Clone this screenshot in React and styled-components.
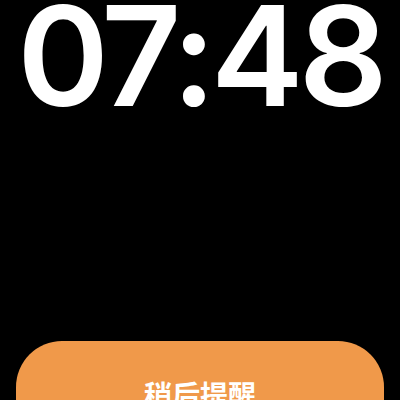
import React from "react";
import styled, { createGlobalStyle } from "styled-components";

const GlobalStyle = createGlobalStyle`
  html, body {
    margin: 0;
    padding: 0;
    background: #000;
    overflow: hidden;
  }
`;

const Screen = styled.div`
  width: 400px;
  height: 400px;
  background: #000;
  display: flex;
  flex-direction: column;
  align-items: center;
  overflow: hidden;
`;

const Clock = styled.div`
  flex-shrink: 0;
  height: 341px;
  font-family: Inter, "Noto Sans", sans-serif;
  font-weight: 600;
  font-size: 139px;
  line-height: 0.8;
  color: #fff;
  letter-spacing: -5px;
`;

const SnoozeButton = styled.button`
  flex-shrink: 0;
  width: 368px;
  height: 106px;
  border: none;
  border-radius: 46px;
  background: #f0994a;
  color: #fff;
  font-family: "Noto Sans CJK SC", sans-serif;
  font-weight: 700;
  font-size: 28px;
  padding: 0;
  cursor: pointer;
`;

const App = () => {
  return (
    <>
      <GlobalStyle />
      <Screen>
        <Clock>07:48</Clock>
        <SnoozeButton>稍后提醒</SnoozeButton>
      </Screen>
    </>
  );
};

export default App;
